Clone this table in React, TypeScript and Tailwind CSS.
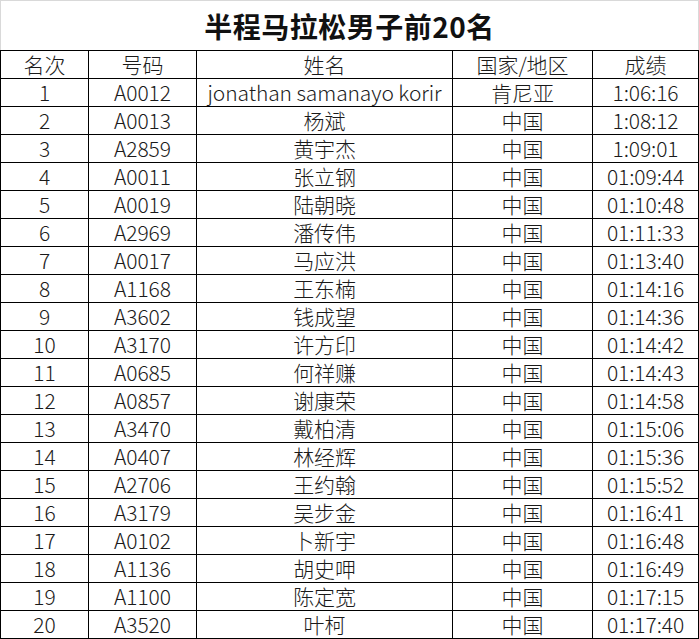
const rows: [string, string, string, string][] = [
  ['A0012', 'jonathan samanayo korir', '肯尼亚', '1:06:16'],
  ['A0013', '杨斌', '中国', '1:08:12'],
  ['A2859', '黄宇杰', '中国', '1:09:01'],
  ['A0011', '张立钢', '中国', '01:09:44'],
  ['A0019', '陆朝晓', '中国', '01:10:48'],
  ['A2969', '潘传伟', '中国', '01:11:33'],
  ['A0017', '马应洪', '中国', '01:13:40'],
  ['A1168', '王东楠', '中国', '01:14:16'],
  ['A3602', '钱成望', '中国', '01:14:36'],
  ['A3170', '许方印', '中国', '01:14:42'],
  ['A0685', '何祥赚', '中国', '01:14:43'],
  ['A0857', '谢康荣', '中国', '01:14:58'],
  ['A3470', '戴柏清', '中国', '01:15:06'],
  ['A0407', '林经辉', '中国', '01:15:36'],
  ['A2706', '王约翰', '中国', '01:15:52'],
  ['A3179', '吴步金', '中国', '01:16:41'],
  ['A0102', '卜新宇', '中国', '01:16:48'],
  ['A1136', '胡史呷', '中国', '01:16:49'],
  ['A1100', '陈定宽', '中国', '01:17:15'],
  ['A3520', '叶柯', '中国', '01:17:40'],
]

const headers = ['名次', '号码', '姓名', '国家/地区', '成绩']

const Cell = ({ children }: { children: React.ReactNode }) => (
  <div className="h-[28px] border-r border-b border-black flex items-center justify-center leading-none whitespace-nowrap">
    {children}
  </div>
)

export default function App() {
  return (
    <div
      className="w-[699px] h-[639px] bg-white text-[#1a1a1a] overflow-hidden"
      style={{ fontFamily: '"Noto Sans CJK SC", "Noto Sans", sans-serif' }}
    >
      {/* Title */}
      <div className="h-[50px] border-t border-l border-r border-[#d9d9d9] flex items-center justify-center">
        <h1 className="text-[28px] font-bold leading-none tracking-[0.5px] text-[#111]">半程马拉松男子前20名</h1>
      </div>

      {/* Table */}
      <div className="grid grid-cols-[88px_108px_256px_140px_106px] border-t border-l border-black text-[21px] font-light tracking-[-0.1px]">
        {headers.map((h) => (
          <Cell key={h}>{h}</Cell>
        ))}
        {rows.map((r, i) => (
          <div key={r[0]} className="contents">
            <Cell>{i + 1}</Cell>
            <Cell>{r[0]}</Cell>
            <Cell>{r[1]}</Cell>
            <Cell>{r[2]}</Cell>
            <Cell>{r[3]}</Cell>
          </div>
        ))}
      </div>
    </div>
  )
}
